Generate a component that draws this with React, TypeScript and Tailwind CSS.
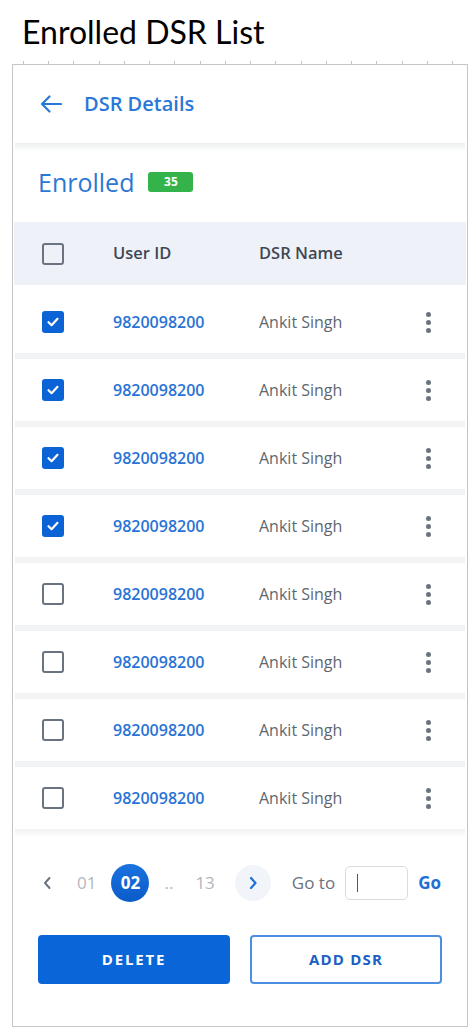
import React from "react";

const rows = [true, true, true, true, false, false, false, false];

function Check({ checked }: { checked: boolean }) {
  if (checked) {
    return (
      <div className="w-[22px] h-[22px] rounded-[3px] bg-[#0b63d6] flex items-center justify-center">
        <svg width="14" height="14" viewBox="0 0 14 14" fill="none">
          <path d="M2.5 7.2 L5.6 10.2 L11.5 3.8" stroke="white" strokeWidth="2.2" strokeLinecap="round" strokeLinejoin="round" />
        </svg>
      </div>
    );
  }
  return <div className="w-[22px] h-[22px] rounded-[3px] border-2 border-[#6b7280]" />;
}

function Kebab() {
  return (
    <div className="flex flex-col items-center gap-[3px]">
      <span className="w-[5px] h-[5px] rounded-full bg-[#6b7280]" />
      <span className="w-[5px] h-[5px] rounded-full bg-[#6b7280]" />
      <span className="w-[5px] h-[5px] rounded-full bg-[#6b7280]" />
    </div>
  );
}

export default function App() {
  const ticks = Array.from({ length: 18 });
  return (
    <div className="w-[474px] h-[1033px] bg-white" style={{ fontFamily: "'Open Sans', sans-serif" }}>
      <div className="h-[61px] pl-[22px] pt-[12px]">
        <div className="text-[32px] leading-[40px] text-black" style={{ fontFamily: "Lato, 'Open Sans', sans-serif" }}>
          Enrolled DSR List
        </div>
      </div>
      <div className="h-[3px] flex justify-between pl-[23px] pr-[21px]">
        {ticks.map((_, i) => (
          <span key={i} className="w-px h-[3px] bg-[#c4c4c4]" />
        ))}
      </div>
      <div className="ml-[12px] w-[456px] h-[963px] border border-[#c6c6c6] flex flex-col">
        <div className="h-[78px] flex items-center pl-[27px] gap-[22px]">
          <svg width="22" height="18" viewBox="0 0 22 18" fill="none">
            <path d="M21 9 H2 M9.5 1.5 L2 9 L9.5 16.5" stroke="#2a78d6" strokeWidth="2.2" strokeLinecap="round" strokeLinejoin="round" />
          </svg>
          <span className="text-[20px] font-semibold text-[#2a78d6]">DSR Details</span>
        </div>
        <div className="h-[8px] mx-[2px] bg-gradient-to-b from-[#eceef1] to-white" />
        <div className="h-[71px] pl-[25px] pt-[14px] flex items-start gap-[14px]">
          <span className="text-[25px] leading-[34px] text-[#2a78d6]">Enrolled</span>
          <span className="mt-[7px] h-[20px] w-[45px] rounded-[3px] bg-[#33b34a] text-white text-[12px] font-bold flex items-center justify-center">35</span>
        </div>
        <div className="h-[63px] mx-[1px] bg-[#eef2f8] flex items-center">
          <div className="w-[99px] pl-[28px]">
            <Check checked={false} />
          </div>
          <div className="w-[146px] text-[16.5px] font-semibold text-[#3f4754]">User ID</div>
          <div className="text-[16.5px] font-semibold text-[#3f4754]">DSR Name</div>
        </div>
        {rows.map((c, i) => (
          <div
            key={i}
            className={`h-[68px] mx-[2px] flex items-center border-t-[6px] ${i === 0 ? "border-white" : "border-[#f2f3f5]"}`}
          >
            <div className="w-[98px] pl-[27px]">
              <Check checked={c} />
            </div>
            <div className="w-[146px] text-[16px] font-semibold text-[#2a73d6]">9820098200</div>
            <div className="flex-1 text-[16px] text-[#5f6670]">Ankit Singh</div>
            <div className="w-[42px] mr-[16px] flex justify-center">
              <Kebab />
            </div>
          </div>
        ))}
        <div className="h-[8px] mx-[2px] bg-gradient-to-b from-[#f0f1f3] to-white" />
        <div className="h-[68px] mt-[12px] flex items-center pl-[29px]">
          <svg width="10" height="14" viewBox="0 0 10 14" fill="none">
            <path d="M7.5 2 L3 7 L7.5 12" stroke="#6b7280" strokeWidth="2" strokeLinecap="round" strokeLinejoin="round" />
          </svg>
          <span className="ml-[25px] text-[17px] text-[#b3b7bd]">01</span>
          <span className="ml-[15px] w-[38px] h-[38px] rounded-full bg-gradient-to-b from-[#1a73e0] to-[#0a5bc8] text-white text-[17px] font-bold flex items-center justify-center">02</span>
          <span className="ml-[15px] text-[17px] text-[#b3b7bd]">..</span>
          <span className="ml-[22px] text-[17px] text-[#b3b7bd]">13</span>
          <span className="ml-[20px] w-[36px] h-[36px] rounded-full bg-[#f1f4f9] flex items-center justify-center">
            <svg width="10" height="14" viewBox="0 0 10 14" fill="none">
              <path d="M3 2 L7.5 7 L3 12" stroke="#1f6fd6" strokeWidth="2.2" strokeLinecap="round" strokeLinejoin="round" />
            </svg>
          </span>
          <span className="ml-[21px] text-[17px] text-[#6b7280]">Go to</span>
          <span className="ml-[10px] w-[63px] h-[34px] rounded-[5px] border border-[#d8dce2] flex items-center pl-[11px]">
            <span className="w-px h-[18px] bg-[#555]" />
          </span>
          <span className="ml-[10px] text-[17px] font-bold text-[#1f6fd6]">Go</span>
        </div>
        <div className="mt-[18px] px-[25px] flex gap-[20px]">
          <button className="w-[192px] h-[49px] rounded-[4px] bg-[#0a66d8] text-white text-[15px] font-bold tracking-[0.12em]">DELETE</button>
          <button className="w-[192px] h-[49px] rounded-[4px] border-2 border-[#4a8fe0] text-[#1a5fc4] text-[15px] font-bold tracking-[0.08em]">ADD DSR</button>
        </div>
      </div>
    </div>
  );
}
